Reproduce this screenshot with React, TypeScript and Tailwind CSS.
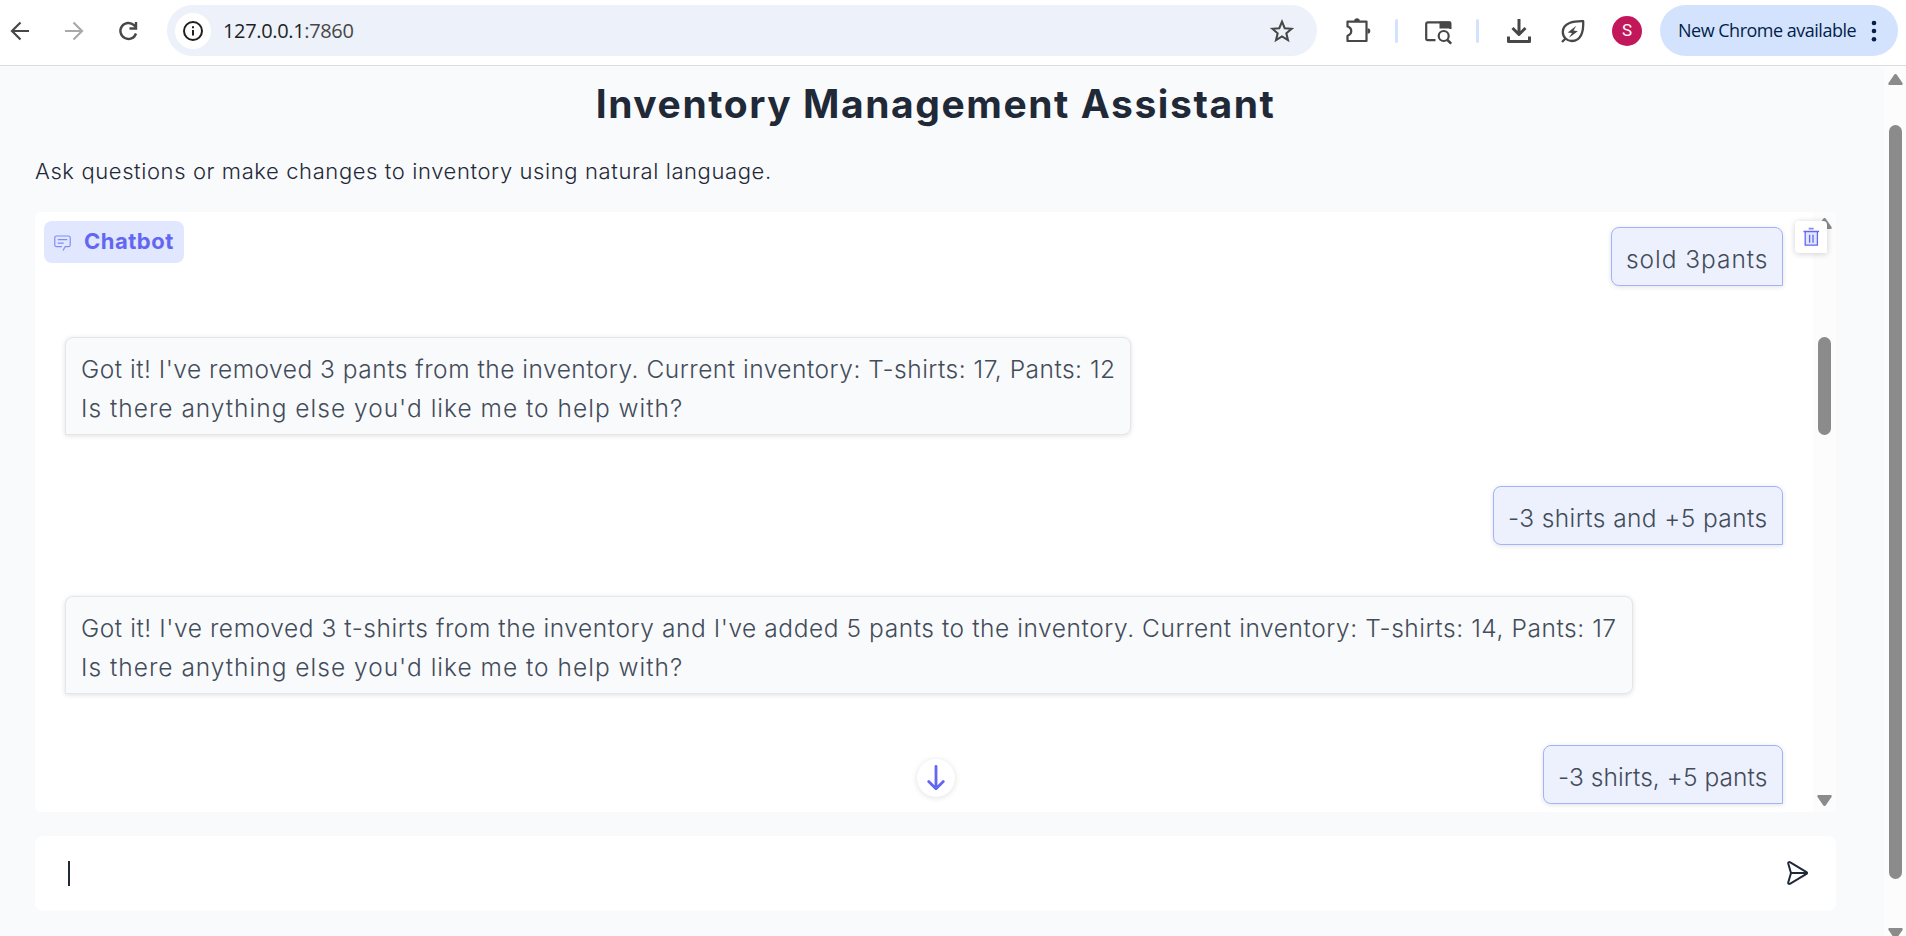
import type { ReactNode } from "react";

function ToolbarIcons() {
  return (
    <div className="flex h-full flex-1 items-center text-[#474747]">
      <svg className="ml-[27px] size-7 shrink-0" viewBox="0 0 28 28" fill="none" stroke="currentColor" strokeWidth="2.2">
        <path d="M3.500 4.600h19v19.400h-19v-5.200c5-1.600 5-7.800 0-9.400z" strokeLinejoin="round" />
        <path d="M10.200 4a2.800 2.800 0 0 1 5.600 0zM23.500 11.200a2.800 2.800 0 0 1 0 5.600z" fill="currentColor" stroke="none" />
      </svg>
      <span className="ml-[23px] h-6 w-[3px] shrink-0 rounded-full bg-[#d3e3fd]" />
      <svg className="ml-[26px] h-7 w-7 shrink-0" viewBox="0 0 28 28" fill="none" stroke="currentColor" strokeWidth="2.2">
        <path d="M11.500 23.200H3.800a1.600 1.600 0 0 1-1.600-1.600V6.900a1.600 1.600 0 0 1 1.600-1.600h21.400a1.200 1.200 0 0 1 1.200 1.200V12" />
        <path d="M15.500 4.500h11v7h-11z" fill="currentColor" stroke="none" />
        <circle cx="19.700" cy="19" r="5" />
        <path d="m23 22.500 4.200 4.200" strokeWidth="2.600" />
      </svg>
      <span className="ml-[24px] h-6 w-[3px] shrink-0 rounded-full bg-[#d3e3fd]" />
      <svg className="ml-[26px] h-7 w-7 shrink-0" viewBox="0 0 28 28" fill="none" stroke="currentColor" strokeWidth="3">
        <path d="M14 2v15M7.500 11 14 17.500 20.500 11M3.500 19.500v5h21v-5" strokeLinejoin="round" />
      </svg>
      <svg className="ml-[26px] h-7 w-7 shrink-0" viewBox="0 0 28 28" fill="none" stroke="currentColor" strokeWidth="2.3" strokeLinejoin="round">
        <path d="M24.200 4.200C15 4 3.800 5.500 3.800 15c0 5.300 4.300 9 9 9C22.500 24 24.600 14 24.200 4.200zM6.600 21.500 3 25" />
        <path d="m17.300 8.800-8.600 6.600 4.300.6-3 4.800 8.800-6.600-4.300-.6z" fill="currentColor" stroke="none" />
      </svg>
      <span className="ml-[25px] flex size-[30px] shrink-0 items-center justify-center rounded-full bg-[#c2185b] font-['Roboto',sans-serif] text-[17px] text-white">
        S
      </span>
    </div>
  );
}

function BrowserBar() {
  return (
    <header className="flex h-[66px] shrink-0 items-start border-b border-[#dddddd] bg-white pt-[5px] font-['Open_Sans',sans-serif]">
      <div className="flex h-[51px] w-[167px] shrink-0 items-center">
        <svg className="ml-[8px] size-6" viewBox="0 0 24 24" fill="none" stroke="#474747" strokeWidth="2.2">
          <path d="M21 12H4.500M12.500 3.500 4 12l8.500 8.500" />
        </svg>
        <svg className="ml-[30px] size-6" viewBox="0 0 24 24" fill="none" stroke="#a9a9a9" strokeWidth="2.2">
          <path d="M3 12h16.500M11.500 3.500 20 12l-8.500 8.500" />
        </svg>
        <svg className="ml-[30px] size-6" viewBox="0 0 24 24" fill="none" stroke="#474747" strokeWidth="2.4">
          <path d="M20 14.500A8 8 0 1 1 18 6.200l2 2" />
          <path d="M20 3v6.500h-6.500" />
        </svg>
      </div>
      <div className="flex h-[51px] w-[1150px] shrink-0 items-center rounded-full bg-[#ecf1fa] pl-2 pr-[22px]">
        <span className="flex size-9 items-center justify-center rounded-full bg-white">
          <svg className="size-5" viewBox="0 0 20 20" fill="none" stroke="#1f1f1f" strokeWidth="2">
            <circle cx="10" cy="10" r="9" />
            <path d="M10 9v5.500M10 5.300v2" />
          </svg>
        </span>
        <span className="ml-[12px] text-[20px] tracking-[-0.35px] text-[#1f1f1f]">
          127.0.0.1<span className="text-[#474747]">:7860</span>
        </span>
        <svg className="ml-auto size-[26px]" viewBox="0 0 24 24" fill="none" stroke="#474747" strokeWidth="1.9">
          <path d="m12 3.400 2.500 6 6.400.5-4.900 4.200 1.500 6.300L12 17l-5.500 3.400L8 14.100 3.100 9.900l6.400-.5z" />
        </svg>
      </div>
      <div className="h-[51px] flex-1">
        <ToolbarIcons />
      </div>
      <div className="mr-2 flex h-[51px] w-[238px] shrink-0 items-center rounded-full bg-[#d3e3fd] pl-[18px] text-[#041e49]">
        <span className="w-[184px] whitespace-nowrap text-[18px] tracking-[-0.5px]">New Chrome available</span>
        <svg className="ml-[1px] h-6 w-5" viewBox="0 0 20 24" fill="currentColor">
          <circle cx="11" cy="4" r="2.3" />
          <circle cx="11" cy="12" r="2.3" />
          <circle cx="11" cy="20.3" r="2.3" />
        </svg>
      </div>
    </header>
  );
}

function Line({ children, className }: { children: ReactNode; className: string }) {
  return <p className={"whitespace-nowrap " + className}>{children}</p>;
}

function UserBubble({ children, className }: { children: ReactNode; className: string }) {
  return (
    <div className={"flex h-[59px] shrink-0 items-center self-end rounded-lg rounded-br-none border border-[#a3b3fb] bg-[#edf1fe] pl-[14px] pt-[5px] shadow-[0_1px_5px_rgba(0,0,0,0.12)] " + className}>
      {children}
    </div>
  );
}

function BotBubble({ children, className }: { children: ReactNode; className: string }) {
  return (
    <div className={"h-[98px] shrink-0 rounded-lg rounded-bl-none border border-[#e4e6ea] bg-[#f9fafc] pl-[15px] pt-[12px] leading-[39px] shadow-[0_1px_5px_rgba(0,0,0,0.12)] " + className}>
      {children}
    </div>
  );
}

function Arrow({ up }: { up?: boolean }) {
  return (
    <svg className="h-[11px] w-[15px] shrink-0" viewBox="0 0 15 11" fill="#8b8b8b">
      {up ? (
        <path d="M6.200.8a1.600 1.600 0 0 1 2.600 0l5.700 8.200c.6 1-.1 2-1.200 2H1.700C.6 11-.1 10 .5 9z" />
      ) : (
        <path d="M6.200 10.200a1.600 1.600 0 0 0 2.600 0L14.500 2c.6-1-.1-2-1.200-2H1.700C.6 0-.1 1 .5 2z" />
      )}
    </svg>
  );
}

function Chat() {
  return (
    <section className="relative flex h-[600px] overflow-hidden rounded-md bg-white">
      <div className="flex h-full w-[1778px] flex-col pl-[30px] pr-[30px] pt-[15px] text-[24.5px] font-light text-[#434c5a]">
        <UserBubble className="w-[172px]">
          <Line className="tracking-[0.95px]">sold 3pants</Line>
        </UserBubble>
        <BotBubble className="mt-[51px] w-[1066px]">
          <Line className="tracking-[0.5px]">Got it! I've removed 3 pants from the inventory. Current inventory: T-shirts: 17, Pants: 12</Line>
          <Line className="tracking-[1px]">Is there anything else you'd like me to help with?</Line>
        </BotBubble>
        <UserBubble className="mt-[51px] w-[290px]">
          <Line className="tracking-[0.4px]">-3 shirts and +5 pants</Line>
        </UserBubble>
        <BotBubble className="mt-[51px] w-[1568px]">
          <Line className="tracking-[0.565px]">
            Got it! I've removed 3 t-shirts from the inventory and I've added 5 pants to the inventory. Current inventory: T-shirts: 14, Pants: 17
          </Line>
          <Line className="tracking-[1px]">Is there anything else you'd like me to help with?</Line>
        </BotBubble>
        <UserBubble className="mt-[51px] w-[240px]">
          <Line className="tracking-[0.07px]">-3 shirts, +5 pants</Line>
        </UserBubble>
      </div>
      <div className="flex h-full w-[23px] flex-col items-center bg-[#fcfcfc] pb-[6px] pt-[6px]">
        <Arrow up />
        <div className="mt-[108px] h-[98px] w-[13px] rounded-full bg-[#8b8b8b]" />
        <div className="mt-auto flex">
          <Arrow />
        </div>
      </div>

      <div className="absolute left-[9px] top-[9px] flex h-[42px] w-[140px] items-center rounded-lg bg-[#e0e7ff] pl-[9px] text-[#6366f1]">
        <svg className="size-[19px]" viewBox="0 0 32 32" fill="#818cf8">
          <path d="M17.740 30 16 29l4-7h6a2 2 0 0 0 2-2V8a2 2 0 0 0-2-2H6a2 2 0 0 0-2 2v12a2 2 0 0 0 2 2h9v2H6a4 4 0 0 1-4-4V8a4 4 0 0 1 4-4h20a4 4 0 0 1 4 4v12a4 4 0 0 1-4 4h-4.840Z" />
          <path d="M8 10h16v2H8zm0 6h10v2H8z" />
        </svg>
        <span className="mb-[2px] ml-[12px] whitespace-nowrap text-[22px] font-bold tracking-[0.5px]">Chatbot</span>
      </div>

      <button className="absolute left-[1760px] top-[9px] flex size-8 items-center justify-center rounded-[4px] rounded-br-none bg-white shadow-[0_1px_6px_rgba(0,0,0,0.18)]">
        <svg className="mt-[-1px] size-[20px]" viewBox="0 0 20 20" fill="none" stroke="#6366f1" strokeWidth="1.3">
          <path d="M4.200 4.500v13.700h12.200V4.500" fill="#e0e7ff" />
          <path d="M2.500 4.500h15.600M8.600 7.800v8M12 7.800v8" />
          <path d="M7.700 1.700h5" stroke="#818cf8" strokeWidth="1.8" />
        </svg>
      </button>

      <button className="absolute left-[882px] top-[547px] flex size-[38px] items-center justify-center rounded-full bg-white shadow-[0_1px_6px_rgba(0,0,0,0.12)]">
        <svg className="ml-[-1px] mt-[-1px] size-[26px]" viewBox="0 0 26 26" fill="none" stroke="#6366f1" strokeWidth="2.8" strokeLinecap="round" strokeLinejoin="round">
          <path d="M13 1.500v22.300M5.700 16.600l7.300 7.200 7.300-7.200" />
        </svg>
      </button>
    </section>
  );
}

export default function App() {
  return (
    <div className="flex h-[936px] w-[1906px] flex-col overflow-hidden bg-[#f9fafc] font-['Inter',sans-serif] text-[#1f2937]">
      <BrowserBar />
      <div className="flex min-h-0 flex-1">
        <main className="flex w-[1884px] flex-col pl-[35px] pr-[48px]">
          <h1 className="mt-[14px] whitespace-nowrap text-center text-[39px] font-bold leading-[48px] tracking-[1.57px]">
            Inventory Management Assistant
          </h1>
          <p className="mt-[27px] whitespace-nowrap text-[22px] font-light leading-[32px] tracking-[0.6px]">
            Ask questions or make changes to inventory using natural language.
          </p>
          <div className="mt-[25px]">
            <Chat />
          </div>
          <div className="mt-6 flex h-[75px] items-center rounded-lg bg-white pl-[33px] pr-[27px]">
            <span className="h-[25px] w-[2px] bg-[#1f2937]" />
            <svg className="ml-auto mt-[-2px] h-6 w-[23px]" viewBox="0 0 23 24" fill="none" stroke="#1f2937" strokeWidth="2" strokeLinejoin="round" strokeLinecap="round">
              <path d="M4.300 1.400 20.500 11.200c.8.500.8 1.200 0 1.700L4.300 22.600c-1.400.8-2.400.1-2-1.400L5 12 2.300 2.800c-.4-1.500.600-2.200 2-1.400zM5 12h15" />
            </svg>
          </div>
        </main>
        <div className="flex w-[22px] flex-col items-center bg-[#fcfcfc] pt-[8px]">
          <Arrow up />
          <div className="mt-[40px] h-[754px] w-[13px] shrink-0 rounded-full bg-[#8b8b8b]" />
          <div className="mt-[49px] flex">
            <Arrow />
          </div>
        </div>
      </div>
    </div>
  );
}
